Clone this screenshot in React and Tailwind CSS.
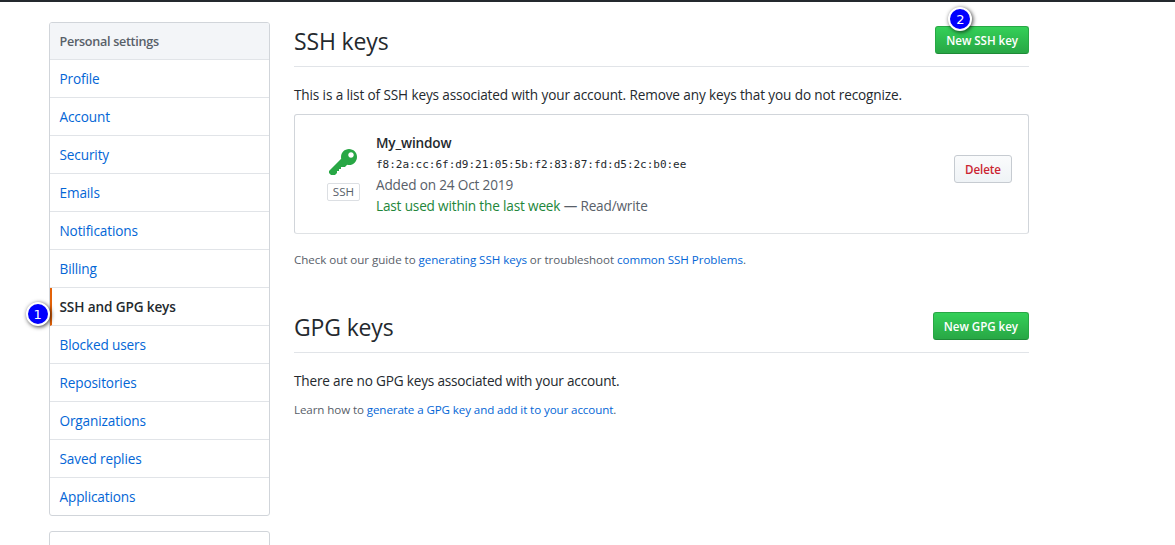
import React from 'react';

const menus = [
  'Profile',
  'Account',
  'Security',
  'Emails',
  'Notifications',
  'Billing',
  'SSH and GPG keys',
  'Blocked users',
  'Repositories',
  'Organizations',
  'Saved replies',
  'Applications',
];

const KeyIcon = () => (
  <svg width="28" height="32" viewBox="0 0 14 16" fill="currentColor" aria-hidden="true" className="mr-px">
    <path
      fillRule="evenodd"
      d="M12.83 2.17C12.08 1.42 11.14 1.03 10 1c-1.13.03-2.08.42-2.83 1.17S6.04 3.86 6.01 5c0 .3.03.59.09.89L0 12v1l1 1h2l1-1v-1h1v-1h1v-1h2l1.09-1.11c.3.08.59.11.91.11 1.14-.03 2.08-.42 2.83-1.17S13.97 6.14 14 5c-.03-1.14-.42-2.08-1.17-2.83zM11 5.38c-.77 0-1.38-.61-1.38-1.38 0-.77.61-1.38 1.38-1.38.77 0 1.38.61 1.38 1.38 0 .77-.61 1.38-1.38 1.38z"
    />
  </svg>
);

const Marker = ({ children, className }) => (
  <span
    className={`absolute flex h-6 w-6 items-center justify-center rounded-full border-[2.5px] border-white bg-[#0000fe] font-['DejaVu_Sans'] text-[13px] leading-none text-white shadow-[1px_1px_4px_rgba(0,0,0,0.75)] ${className}`}
  >
    {children}
  </span>
);

const Link = ({ children }) => (
  <a href="#" className="text-[#0366d6]">
    {children}
  </a>
);

const Subhead = ({ title, action, children }) => (
  <div className="flex h-[41px] justify-between border-b border-[#e1e4e8]">
    <h2 className="text-[23px] leading-[30px] tracking-[-0.15px]">{title}</h2>
    <div className="relative">
      <button className="h-7 rounded-[3px] border border-[#28a745] border-b-[#1e8a37] bg-linear-to-b from-[#34d058] to-[#28a745] px-2.5 pt-px text-[11.6px] font-semibold tracking-[-0.04px] whitespace-nowrap text-white">
        {action}
      </button>
      {children}
    </div>
  </div>
);

const Sidebar = () => (
  <aside className="w-[221px] shrink-0">
    <nav className="relative rounded-[3px] border border-[#d1d5da]">
      <div className="h-[37px] rounded-t-[2px] border-b border-[#e1e4e8] bg-[#f3f5f8] px-[9.5px] text-[12.6px] leading-[37px] font-semibold tracking-[-0.3px] text-[#586069]">
        Personal settings
      </div>
      {menus.map((name) => {
        const active = name === 'SSH and GPG keys';
        return (
          <a
            key={name}
            href="#"
            className={`block h-[38px] border-b border-[#e1e4e8] leading-[38px] last:h-[37px] last:border-b-0 ${
              active
                ? 'border-l-2 border-l-[#e36209] pl-[7.5px] font-semibold text-[#24292e]'
                : 'pl-[9.5px] text-[#0366d6]'
            }`}
          >
            {name}
          </a>
        );
      })}
    </nav>
    <div className="mt-[15px] h-10 rounded-[3px] border border-[#d1d5da]" />
  </aside>
);

const App = () => {
  return (
    <div className="relative h-[545px] w-[1175px] overflow-hidden border-t-2 border-[#24292e] bg-white pt-5 pl-[49px] font-['Open_Sans','Noto_Sans',sans-serif] text-[13.6px] tracking-[-0.13px] text-[#24292e]">
      <div className="flex gap-6">
        <Sidebar />

        <main className="w-[735px] pt-1">
          <Subhead title="SSH keys" action="New SSH key">
            <Marker className="-top-[19px] left-[13px]">2</Marker>
          </Subhead>
          <p className="mt-[17px] leading-[21px]">
            This is a list of SSH keys associated with your account. Remove any keys that you do not recognize.
          </p>

          {/* Key card */}
          <div className="mt-[9px] flex h-[120px] items-center rounded-[3px] border border-[#d1d5da] border-b-[#dfe2e5] pr-4 pl-8">
            <div className="flex w-[33px] flex-col items-center text-[#28a745]">
              <KeyIcon />
              <span className="mt-1 flex h-[18px] w-[33px] items-center justify-center rounded-[2px] border border-[#dcdfe3] text-[11.6px] tracking-normal text-[#586069]">
                SSH
              </span>
            </div>
            <div className="ml-4 flex-1 pb-px leading-[21px] tracking-[-0.17px] text-[#586069]">
              <strong className="block font-semibold text-[#24292e]">My_window</strong>
              <code className="block font-['DejaVu_Sans_Mono',monospace] text-[11px] leading-[23px] tracking-[-0.02px] text-[#24292e]">
                f8:2a:cc:6f:d9:21:05:5b:f2:83:87:fd:d5:2c:b0:ee
              </code>
              <span className="-mt-0.5 block">Added on 24 Oct 2019</span>
              <span className="block">
                <span className="text-[#22863a]">Last used within the last week</span> — Read/write
              </span>
            </div>
            <button className="mb-[10px] h-7 w-[58px] rounded-[3px] border border-[#c6cbd1] bg-linear-to-b from-[#fafbfc] to-[#eff3f6] pt-px text-[11.6px] font-semibold tracking-[-0.1px] text-[#cb2431]">
              Delete
            </button>
          </div>

          <p className="mt-4 text-[11.6px] leading-[20px] tracking-[-0.05px] text-[#586069]">
            Check out our guide to <Link>generating SSH keys</Link> or troubleshoot{' '}
            <Link>common SSH Problems</Link>.
          </p>

          <div className="mt-[42px]">
            <Subhead title="GPG keys" action="New GPG key" />
          </div>
          <p className="mt-[17px] leading-[21px] tracking-[-0.19px]">
            There are no GPG keys associated with your account.
          </p>
          <p className="mt-[9px] text-[11.6px] leading-[20px] tracking-[-0.1px] text-[#586069]">
            Learn how to <Link>generate a GPG key and add it to your account</Link>.
          </p>
        </main>
      </div>
      <Marker className="top-[300px] left-[25.5px]">1</Marker>
    </div>
  );
};

export default App;
